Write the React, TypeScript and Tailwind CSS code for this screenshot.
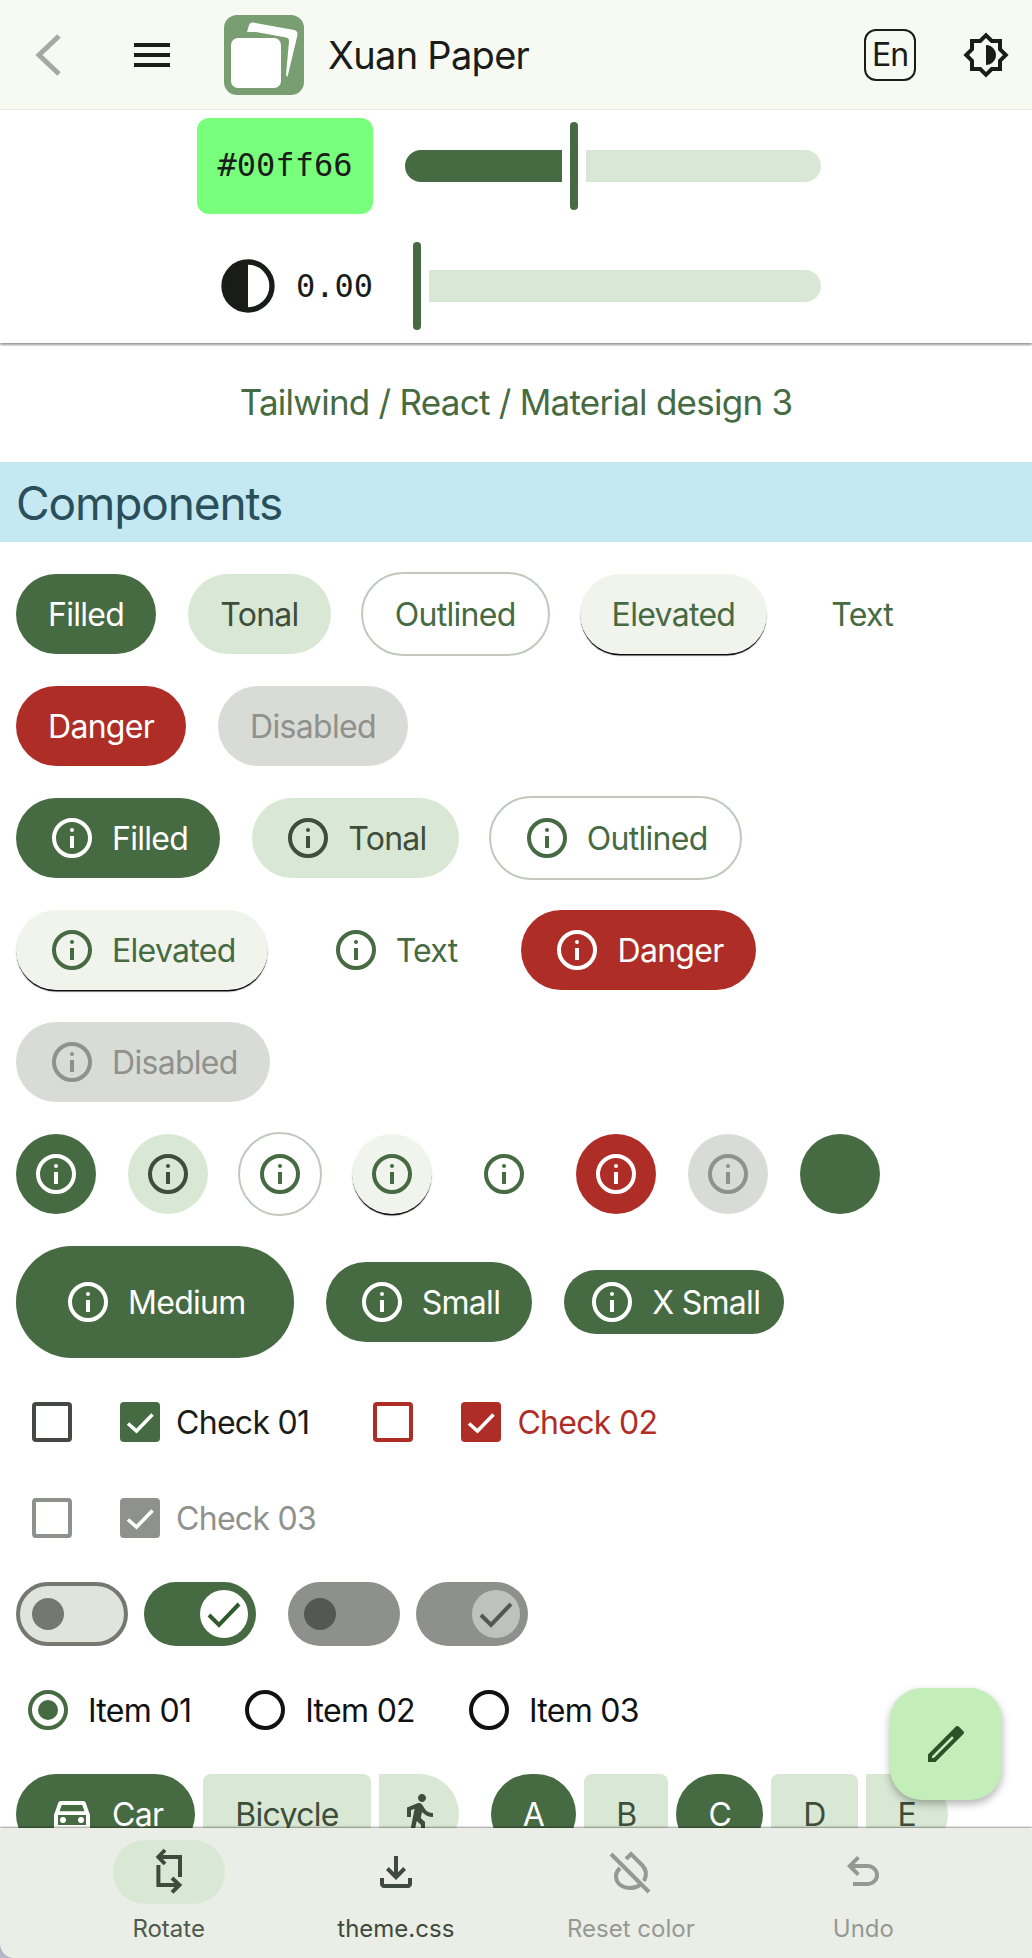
import React from "react";

const INFO_KINDS = {
  filled: "bg-[#466a42] text-white",
  tonal: "bg-[#d9e8d4] text-[#3e4e3b]",
  outlined: "text-[#466a42] outline-2 outline-[#c2c8bc]",
  elevated: "bg-[#f1f4ed] text-[#466a42] shadow-[0_2px_1px_-0.5px_#000]",
  text: "text-[#466a42]",
  danger: "bg-[#ae2d26] text-white",
  disabled: "bg-[#d9dbd6] text-[#8f918d]",
};

type Kind = keyof typeof INFO_KINDS;

function InfoIcon() {
  return (
    <svg viewBox="0 0 24 24" className="size-12 shrink-0" fill="none">
      <circle cx="12" cy="12" r="9" stroke="currentColor" strokeWidth="2" />
      <rect x="11" y="11" width="2" height="6" fill="currentColor" />
      <circle cx="12" cy="8" r="1" fill="currentColor" />
    </svg>
  );
}

function Btn({ kind, label, icon }: { kind: Kind; label: string; icon?: boolean }) {
  return (
    <div className={`flex h-20 items-center gap-4 rounded-full px-8 ${INFO_KINDS[kind]}`}>
      {icon && <InfoIcon />}
      <span className="mt-0.5">{label}</span>
    </div>
  );
}

function RoundBtn({ kind, empty }: { kind: Kind; empty?: boolean }) {
  return (
    <div className={`flex size-20 items-center justify-center rounded-full ${INFO_KINDS[kind]}`}>
      {!empty && <InfoIcon />}
    </div>
  );
}

function Tick({ className }: { className: string }) {
  return (
    <svg viewBox="0 0 40 40" className={className} fill="none">
      <path d="M8 21.5 16.5 29 32.5 12.5" stroke="currentColor" strokeWidth="3.6" />
    </svg>
  );
}

function Box({ color, on }: { color: string; on?: boolean }) {
  if (on) {
    return (
      <div className={`size-10 shrink-0 rounded-[4px] text-white ${color}`}>
        <Tick className="size-10" />
      </div>
    );
  }
  return <div className={`size-10 shrink-0 rounded-[4px] border-4 ${color}`} />;
}

function Radio({ on, label }: { on?: boolean; label: string }) {
  return (
    <div className="flex items-center gap-4">
      <div className={`m-1 flex size-10 items-center justify-center rounded-full border-4 ${on ? "border-[#466a42]" : "border-[#111]"}`}>
        {on && <div className="size-5 rounded-full bg-[#466a42]" />}
      </div>
      <span className="mt-0.5 text-[#111]">{label}</span>
    </div>
  );
}

function SwitchCheck({ className }: { className: string }) {
  return (
    <svg viewBox="0 0 48 48" className={className} fill="none">
      <path d="M9 25 19 35 39 14" stroke="currentColor" strokeWidth="4" />
    </svg>
  );
}

function Seg({ on, cls, children }: { on?: boolean; cls: string; children: React.ReactNode }) {
  return (
    <div className={`flex h-20 items-center gap-4 px-8 pt-0.5 ${on ? "bg-[#466a42] text-white" : "bg-[#d9e8d4] text-[#3e4e3b]"} ${cls}`}>
      {children}
    </div>
  );
}

function NavItem({ label, d, active, dim, children }: { label: string; d?: string; active?: boolean; dim?: boolean; children?: React.ReactNode }) {
  return (
    <div className={`flex min-w-28 flex-col items-center ${dim ? "text-[#969993]" : "text-[#3f4a3d]"}`}>
      <div className={`flex h-16 w-28 items-center justify-center rounded-full ${active ? "bg-[#d9e8d4]" : ""}`}>
        <svg viewBox="0 0 24 24" className="size-12" fill={d ? "currentColor" : "none"}>
          {d ? <path d={d} /> : children}
        </svg>
      </div>
      <span className={`mt-[9px] text-2xl leading-8 tracking-normal ${label === "Rotate" ? "text-[#4f5a4d]" : ""}`}>{label}</span>
    </div>
  );
}

export default function App() {
  return (
    <div className="flex h-screen flex-col overflow-hidden bg-[#b4b8c8] font-['Inter',sans-serif] text-[32px] leading-10 tracking-[-0.7px] text-[#1a1c18]">
      <div className="flex flex-1 flex-col overflow-hidden bg-white">
        <header className="flex h-[110px] shrink-0 items-center border-b border-[#e6e9e2] bg-[#f7faf3] pl-6 pr-[22px]">
          <svg viewBox="0 0 48 48" className="size-12 text-[#a6a8a4]" fill="none">
            <path d="M35 11 15 30 35 49" transform="translate(0 -6)" stroke="currentColor" strokeWidth="5" />
          </svg>
          <svg viewBox="0 0 24 24" className="ml-14 size-12" fill="currentColor">
            <path d="M3 18h18v-2H3v2zm0-5h18v-2H3v2zm0-7v2h18V6H3z" />
          </svg>
          <svg viewBox="0 0 80 80" className="ml-12 size-20">
            <rect width="80" height="80" rx="13" fill="#789e72" />
            <path d="M23 17 25 10Q26 7 29 7.5L70 15Q74 16 73.5 20L63.5 62 62 60 65 26Q65 23 62 22.5L32 17Z" fill="#fff" />
            <rect x="7" y="23" width="50" height="50" rx="7" fill="#fff" />
          </svg>
          <span className="ml-6 text-[38px] tracking-[-0.7px]">Xuan Paper</span>
          <div className="ml-auto flex h-[52px] w-[52px] items-center justify-center rounded-xl border-2 border-[#1a1c18] text-[32px] tracking-[-1px]">En</div>
          <svg viewBox="0 0 24 24" className="ml-[46px] size-12" fill="currentColor">
            <path d="M20 15.31 23.31 12 20 8.69V4h-4.69L12 .69 8.69 4H4v4.69L.69 12 4 15.31V20h4.69L12 23.31 15.31 20H20v-4.69zM18 14.48V18h-3.52L12 20.48 9.52 18H6v-3.52L3.52 12 6 9.52V6h3.52L12 3.52 14.48 6H18v3.52L20.48 12 18 14.48zM12 7v10c2.76 0 5-2.24 5-5s-2.24-5-5-5z" />
          </svg>
        </header>

        <section className="z-10 flex h-[233px] shrink-0 flex-col gap-7 bg-white pt-2 font-['DejaVu_Sans_Mono',monospace] tracking-normal shadow-[0_2px_2px_rgba(0,0,0,0.4)]">
          <div className="flex h-24 items-center">
            <div className="ml-[197px] flex h-24 w-44 items-center justify-center rounded-xl bg-[#78ff7c] pb-0.5">#00ff66</div>
            <div className="ml-8 flex h-[88px] w-104 items-center gap-2">
              <div className="h-8 w-[157px] rounded-l-full bg-[#466a42]" />
              <div className="h-[88px] w-2 rounded-full bg-[#466a42]" />
              <div className="h-8 flex-1 rounded-r-full bg-[#d9e8d4]" />
            </div>
          </div>
          <div className="flex h-[88px] items-center">
            <svg viewBox="0 0 24 24" className="ml-[216px] size-16" fill="none">
              <circle cx="12" cy="12" r="9" stroke="currentColor" strokeWidth="2" />
              <path d="M12 3a9 9 0 0 0 0 18z" fill="currentColor" />
            </svg>
            <span className="ml-4">0.00</span>
            <div className="ml-8 flex h-[88px] w-104 items-center gap-2 pl-2">
              <div className="h-[88px] w-2 rounded-full bg-[#466a42]" />
              <div className="h-8 flex-1 rounded-r-full bg-[#d9e8d4]" />
            </div>
          </div>
        </section>

        <main className="relative flex-1 overflow-hidden">
          <div className="flex h-[119px] items-center justify-center pb-0.5 text-[35px] tracking-[-0.75px] text-[#466a42]">Tailwind / React / Material design 3</div>
          <h2 className="flex h-20 items-center bg-[#c4e9f2] px-4 pt-0.5 text-[46px] font-normal tracking-[-1.1px] text-[#2a4f5a]">Components</h2>

          <div className="flex flex-col gap-8 p-4 pt-8">
            <div className="flex flex-wrap gap-8">
              <Btn kind="filled" label="Filled" />
              <Btn kind="tonal" label="Tonal" />
              <Btn kind="outlined" label="Outlined" />
              <Btn kind="elevated" label="Elevated" />
              <Btn kind="text" label="Text" />
              <Btn kind="danger" label="Danger" />
              <Btn kind="disabled" label="Disabled" />
            </div>
            <div className="flex flex-wrap gap-8">
              <Btn kind="filled" label="Filled" icon />
              <Btn kind="tonal" label="Tonal" icon />
              <Btn kind="outlined" label="Outlined" icon />
              <Btn kind="elevated" label="Elevated" icon />
              <Btn kind="text" label="Text" icon />
              <Btn kind="danger" label="Danger" icon />
              <Btn kind="disabled" label="Disabled" icon />
            </div>
            <div className="flex gap-8">
              <RoundBtn kind="filled" />
              <RoundBtn kind="tonal" />
              <RoundBtn kind="outlined" />
              <RoundBtn kind="elevated" />
              <RoundBtn kind="text" />
              <RoundBtn kind="danger" />
              <RoundBtn kind="disabled" />
              <RoundBtn kind="filled" empty />
            </div>
            <div className="flex items-center gap-8">
              <div className="flex h-28 items-center gap-4 rounded-full bg-[#466a42] px-12 text-white">
                <InfoIcon />
                <span className="mt-0.5">Medium</span>
              </div>
              <Btn kind="filled" label="Small" icon />
              <div className="flex h-16 items-center gap-4 rounded-full bg-[#466a42] px-6 text-white">
                <InfoIcon />
                <span className="mt-0.5">X Small</span>
              </div>
            </div>

            <div className="flex h-16 items-center gap-16 pl-4">
              <div className="flex items-center">
                <Box color="border-[#444844]" />
                <div className="ml-12"><Box color="bg-[#466a42]" on /></div>
                <span className="ml-4 mt-0.5">Check 01</span>
              </div>
              <div className="flex items-center text-[#ae2d26]">
                <Box color="border-[#ae2d26]" />
                <div className="ml-12"><Box color="bg-[#ae2d26]" on /></div>
                <span className="ml-4 mt-0.5">Check 02</span>
              </div>
            </div>
            <div className="flex h-16 items-center pl-4 text-[#8f918d]">
              <Box color="border-[#8f918d]" />
              <div className="ml-12"><Box color="bg-[#8f918d]" on /></div>
              <span className="ml-4 mt-0.5">Check 03</span>
            </div>

            <div className="flex items-center">
              <div className="flex h-16 w-28 items-center rounded-full border-4 border-[#747870] bg-[#e0e4dc] pl-3">
                <div className="size-8 rounded-full bg-[#747870]" />
              </div>
              <div className="ml-4 flex h-16 w-28 items-center justify-end rounded-full bg-[#466a42] pr-2">
                <div className="flex size-12 items-center justify-center rounded-full bg-white text-[#2f5a2c]">
                  <SwitchCheck className="size-12" />
                </div>
              </div>
              <div className="ml-8 flex h-16 w-28 items-center rounded-full bg-[#8e908c] pl-4">
                <div className="size-8 rounded-full bg-[#545754]" />
              </div>
              <div className="ml-4 flex h-16 w-28 items-center justify-end rounded-full bg-[#8e908c] pr-2">
                <div className="flex size-12 items-center justify-center rounded-full bg-[#bfc1bc] text-[#545754]">
                  <SwitchCheck className="size-12" />
                </div>
              </div>
            </div>

            <div className="flex h-16 items-center gap-[50px] pl-2">
              <Radio on label="Item 01" />
              <Radio label="Item 02" />
              <Radio label="Item 03" />
            </div>

            <div className="flex items-center gap-8">
              <div className="flex gap-2">
                <Seg on cls="rounded-full">
                  <svg viewBox="0 0 24 24" className="size-12" fill="currentColor">
                    <path d="M18.92 6.01C18.72 5.42 18.16 5 17.5 5h-11c-.66 0-1.21.42-1.42 1.01L3 12v8c0 .55.45 1 1 1h1c.55 0 1-.45 1-1v-1h12v1c0 .55.45 1 1 1h1c.55 0 1-.45 1-1v-8l-2.08-5.99zM6.85 7h10.29l1.08 3.11H5.77L6.85 7zM19 17H5v-5h14v5z" />
                    <circle cx="7.5" cy="14.5" r="1.5" />
                    <circle cx="16.5" cy="14.5" r="1.5" />
                  </svg>
                  <span>Car</span>
                </Seg>
                <Seg cls="rounded-lg">Bicycle</Seg>
                <Seg cls="rounded-l-lg rounded-r-full !px-4">
                  <svg viewBox="0 0 24 24" className="size-12" fill="currentColor">
                    <path d="M13.5 5.5c1.1 0 2-.9 2-2s-.9-2-2-2-2 .9-2 2 .9 2 2 2zM9.8 8.9 7 23h2.1l1.8-8 2.1 2v6h2v-7.5l-2.1-2 .6-3C14.8 12 16.8 13 19 13v-2c-1.9 0-3.5-1-4.3-2.4l-1-1.6c-.4-.6-1-1-1.7-1-.3 0-.5.1-.8.1L6 8.3V13h2V9.6l1.8-.7" />
                  </svg>
                </Seg>
              </div>
              <div className="flex gap-2">
                <Seg on cls="rounded-full">A</Seg>
                <Seg cls="rounded-lg">B</Seg>
                <Seg on cls="rounded-full">C</Seg>
                <Seg cls="rounded-lg">D</Seg>
                <Seg cls="rounded-l-lg rounded-r-full">E</Seg>
              </div>
            </div>
          </div>

          <div className="absolute left-[890px] top-[1345px] flex size-28 items-center justify-center rounded-[32px] bg-[#c4eeb9] text-[#2a5228] shadow-[0_4px_8px_rgba(0,0,0,0.3)]">
            <svg viewBox="0 0 24 24" className="size-12" fill="currentColor" fillRule="evenodd">
              <path d="M3 17.25V21h3.75L20.7 7.05c.4-.4.4-1.02 0-1.41l-2.34-2.34c-.39-.39-1.02-.39-1.41 0L3 17.25zM5 18.1 15 8.1l.9.9L5.9 19H5z" />
            </svg>
          </div>
        </main>
      </div>

      <nav className="z-10 flex h-[130px] shrink-0 justify-evenly rounded-bl-[14px] bg-[#ebeee7] pt-3 shadow-[0_-1px_2px_rgba(0,0,0,0.4)]">
        <NavItem label="Rotate" active>
          <g stroke="currentColor" strokeWidth="2">
            <path d="M10 1 6.7 4.5 10 8M7 4.5h10.5v10" />
            <path d="M6.7 8.5v10h10.5M13.5 15l3.7 3.5-3.7 3.7" />
          </g>
        </NavItem>
        <NavItem label="theme.css" d="M12 16 7 11l1.4-1.45L11 12.15V4h2v8.15l2.6-2.6L17 11l-5 5Zm-6 4c-.55 0-1.02-.2-1.41-.59A1.93 1.93 0 0 1 4 18v-3h2v3h12v-3h2v3c0 .55-.2 1.02-.59 1.41-.39.39-.86.59-1.41.59H6Z" />
        <NavItem label="Reset color" dim>
          <g stroke="currentColor" strokeWidth="2">
            <path d="M2 3 21 22" />
            <path d="M9.5 5.5 12 3l5.5 5.5c2 2 2.5 5 1 8" />
            <path d="M6.5 10C5 11.5 4.5 13 4.5 14c0 4 3.5 6 7 6 2 0 3.5-.5 5-1.5" />
          </g>
        </NavItem>
        <NavItem label="Undo" dim d="M7 19v-2h7.1c1.05 0 1.96-.33 2.74-1 .77-.67 1.16-1.5 1.16-2.5s-.39-1.83-1.16-2.5c-.78-.67-1.69-1-2.74-1H7.8l2.6 2.6L9 14 4 9l5-5 1.4 1.4L7.8 8h6.3c1.62 0 3 .53 4.16 1.58C19.42 10.63 20 11.93 20 13.5s-.58 2.87-1.74 3.92C17.1 18.47 15.72 19 14.1 19H7Z" />
      </nav>
    </div>
  );
}
